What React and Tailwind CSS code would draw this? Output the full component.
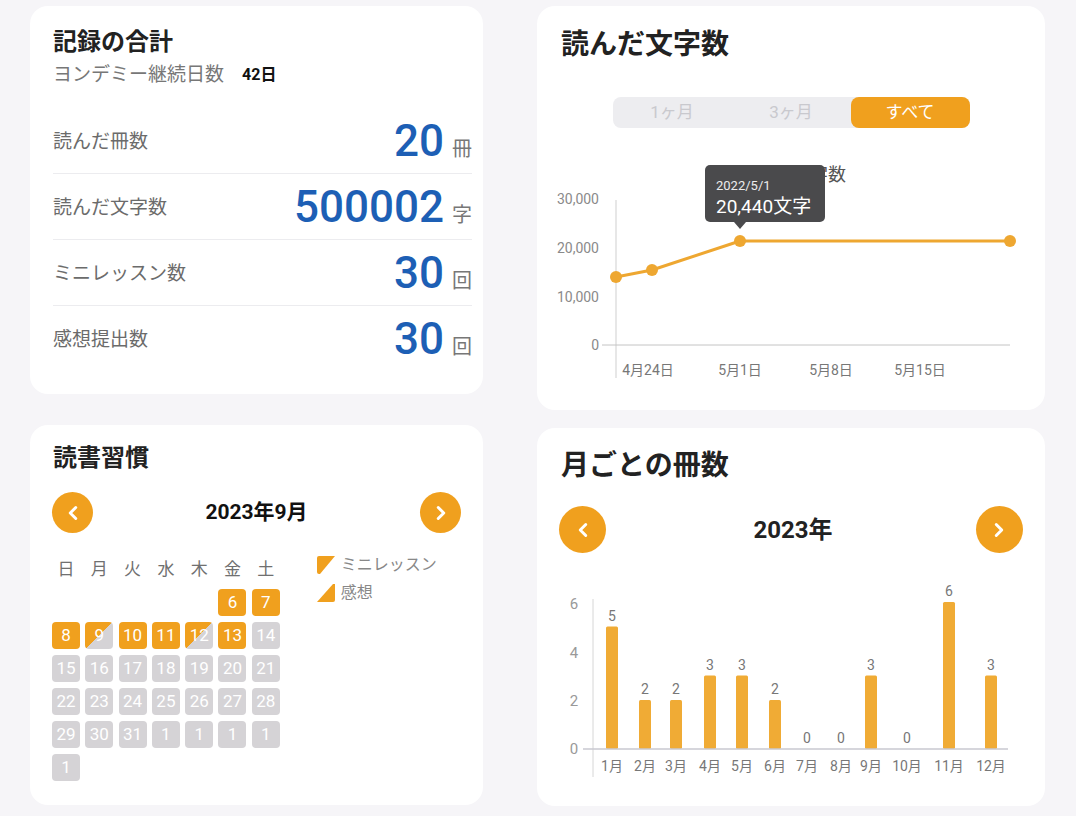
import React from 'react';
import { ChevronLeft, ChevronRight } from 'lucide-react';

const ORANGE = '#f0a01e';

// ─── 記録の合計 ─────────────────────────────────────────────
function StatRow({ label, value, unit, last }) {
  return (
    <div className={`h-[66px] flex items-center justify-between ${last ? '' : 'border-b border-[#ececef]'}`}>
      <span className="text-[19px] text-[#6b6b6b] pt-[3px]">{label}</span>
      <div className="flex items-baseline gap-[8px]">
        <span className="text-[44px] leading-none font-medium text-[#1d5fb5] font-[Roboto,sans-serif]">{value}</span>
        <span className="text-[20px] leading-none text-[#777]">{unit}</span>
      </div>
    </div>
  );
}

function TotalsCard() {
  return (
    <div className="h-[388px] bg-white rounded-[18px] pt-[20px] pl-[23px] pr-[11px]">
      <h2 className="text-[24px] leading-[32px] font-bold text-[#222]">記録の合計</h2>
      <div className="mt-[5px] text-[19px] leading-[24px] text-[#777] flex items-center gap-[18px]">
        <span>ヨンデミー継続日数</span>
        <span className="text-[16px] font-bold text-[#111]">42日</span>
      </div>
      <div className="mt-[21px]">
        <StatRow label="読んだ冊数" value="20" unit="冊" />
        <StatRow label="読んだ文字数" value="500002" unit="字" />
        <StatRow label="ミニレッスン数" value="30" unit="回" />
        <StatRow label="感想提出数" value="30" unit="回" last />
      </div>
    </div>
  );
}

// ─── 読んだ文字数 ───────────────────────────────────────────
function LineChart() {
  const pts = [[79, 127], [115, 120], [203, 91], [473, 91]];
  return (
    <svg width="508" height="245" viewBox="0 0 508 245" className="block">
      <text x="255" y="31" textAnchor="middle" fontSize="18" fill="#555">読んだ文字数</text>
      {[['30,000', 54], ['20,000', 103], ['10,000', 152], ['0', 200]].map(([t, y]) => (
        <text key={t} x="62" y={y} textAnchor="end" fontSize="14" fill="#8a8a8a">{t}</text>
      ))}
      <line x1="79" y1="50" x2="79" y2="228" stroke="#cfcfcf" strokeWidth="1" />
      <line x1="65" y1="195" x2="473" y2="195" stroke="#c4c4c4" strokeWidth="1" />
      {[['4月24日', 111], ['5月1日', 203], ['5月8日', 294], ['5月15日', 383]].map(([t, x]) => (
        <text key={t} x={x} y="225" textAnchor="middle" fontSize="14" fill="#777">{t}</text>
      ))}
      <polyline points={pts.map((p) => p.join(',')).join(' ')} fill="none" stroke="#eea731" strokeWidth="3" strokeLinejoin="round" />
      {pts.map(([x, y]) => (
        <circle key={x} cx={x} cy={y} r="6" fill="#eea731" />
      ))}
      <rect x="168" y="15" width="120" height="57" rx="5" fill="#4a4a4c" />
      <polygon points="197,72 209,72 203,79" fill="#4a4a4c" />
      <text x="179" y="40" fontSize="13" fill="#ececec">2022/5/1</text>
      <text x="179" y="63" fontSize="19" fill="#fff">20,440文字</text>
    </svg>
  );
}

function CharsCard() {
  const tabs = ['1ヶ月', '3ヶ月', 'すべて'];
  return (
    <div className="h-[404px] bg-white rounded-[18px] pt-[21px]">
      <h2 className="pl-[24px] text-[28px] leading-[36px] font-bold text-[#222]">読んだ文字数</h2>
      <div className="mt-[34px] mx-auto w-[357px] h-[31px] rounded-[8px] bg-[#ededf0] grid grid-cols-3">
        {tabs.map((t, i) => (
          <div
            key={t}
            className={`flex items-center justify-center text-[17px] rounded-[8px] ${i === 2 ? 'bg-[#f0a01e] text-white' : 'text-[#c9c9ce]'}`}
          >
            {t}
          </div>
        ))}
      </div>
      <div className="mt-[22px]">
        <LineChart />
      </div>
    </div>
  );
}

// ─── 読書習慣 ───────────────────────────────────────────────
function NavCircle({ dir, size }) {
  const Icon = dir === 'left' ? ChevronLeft : ChevronRight;
  return (
    <div className={`${size} rounded-full bg-[#f0a01e] flex items-center justify-center`}>
      <Icon size={22} strokeWidth={3.2} color="#fff" />
    </div>
  );
}

function HabitCard() {
  const week = ['日', '月', '火', '水', '木', '金', '土'];
  // f = both, h = mini lesson only, g = none, null = blank
  const cells = [
    null, null, null, null, null, ['6', 'f'], ['7', 'f'],
    ['8', 'f'], ['9', 'h'], ['10', 'f'], ['11', 'f'], ['12', 'h'], ['13', 'f'], ['14', 'g'],
    ['15', 'g'], ['16', 'g'], ['17', 'g'], ['18', 'g'], ['19', 'g'], ['20', 'g'], ['21', 'g'],
    ['22', 'g'], ['23', 'g'], ['24', 'g'], ['25', 'g'], ['26', 'g'], ['27', 'g'], ['28', 'g'],
    ['29', 'g'], ['30', 'g'], ['31', 'g'], ['1', 'g'], ['1', 'g'], ['1', 'g'], ['1', 'g'],
    ['1', 'g'],
  ];
  const cellBg = {
    f: 'bg-[#f0a01e]',
    h: 'bg-[linear-gradient(135deg,#f0a01e_50%,#d5d3d6_50%)]',
    g: 'bg-[#d5d3d6]',
  };
  return (
    <div className="h-[380px] bg-white rounded-[18px] pt-[17px] px-[22px]">
      <h2 className="pl-[1px] text-[24px] leading-[32px] font-bold text-[#222]">読書習慣</h2>
      <div className="mt-[18px] flex items-center justify-between">
        <NavCircle dir="left" size="w-[41px] h-[41px]" />
        <span className="text-[21px] font-bold text-[#111]">2023年9月</span>
        <NavCircle dir="right" size="w-[41px] h-[41px]" />
      </div>
      <div className="mt-[24px] flex items-start gap-[36px]">
        <div>
          <div className="grid grid-cols-[repeat(7,28px)] gap-x-[5.3px]">
            {week.map((w) => (
              <div key={w} className="text-center text-[17px] leading-[24px] text-[#707070]">{w}</div>
            ))}
          </div>
          <div className="mt-[8px] grid grid-cols-[repeat(7,28px)] gap-x-[5.3px] gap-y-[6px]">
            {cells.map((c, i) =>
              c ? (
                <div key={i} className={`h-[27px] rounded-[4px] flex items-center justify-center text-[17px] text-white ${cellBg[c[1]]}`}>
                  {c[0]}
                </div>
              ) : (
                <div key={i} className="h-[27px]" />
              )
            )}
          </div>
        </div>
        <div className="-mt-[3px] flex flex-col gap-[6px]">
          <div className="flex items-center gap-[5px] h-[22px]">
            <svg width="20" height="20" viewBox="0 0 20 20">
              <path d="M3 1 H19 L4 19 H3 Q1 19 1 17 V3 Q1 1 3 1 Z" fill={ORANGE} />
            </svg>
            <span className="text-[16px] text-[#888]">ミニレッスン</span>
          </div>
          <div className="flex items-center gap-[5px] h-[22px]">
            <svg width="20" height="20" viewBox="0 0 20 20">
              <path d="M17 1 H19 V17 Q19 19 17 19 H1 Z" fill={ORANGE} />
            </svg>
            <span className="text-[16px] text-[#888]">感想</span>
          </div>
        </div>
      </div>
    </div>
  );
}

// ─── 月ごとの冊数 ───────────────────────────────────────────
function BarChart() {
  const data = [
    ['1月', 75, 5], ['2月', 108, 2], ['3月', 139, 2], ['4月', 173, 3], ['5月', 205, 3], ['6月', 238, 2],
    ['7月', 270, 0], ['8月', 304, 0], ['9月', 334, 3], ['10月', 370, 0], ['11月', 412, 6], ['12月', 454, 3],
  ];
  const unit = 24.5;
  return (
    <svg width="508" height="215" viewBox="0 0 508 215" className="block">
      {[['6', 25], ['4', 74], ['2', 122], ['0', 170]].map(([t, y]) => (
        <text key={t} x="37" y={y + 5} textAnchor="middle" fontSize="15" fill="#999">{t}</text>
      ))}
      <line x1="56" y1="20" x2="56" y2="198" stroke="#d6d6d6" strokeWidth="1" />
      {data.map(([m, x, v]) => {
        const top = 170 - v * unit;
        return (
          <g key={m}>
            {v > 0 && <rect x={x - 6} y={top} width="12" height={v * unit} rx="1.5" fill="#f0ab35" />}
            <text x={x} y={top - 6} textAnchor="middle" fontSize="14" fill="#777">{v}</text>
            <text x={x} y="192" textAnchor="middle" fontSize="14" fill="#777">{m}</text>
          </g>
        );
      })}
      <line x1="46" y1="170" x2="471" y2="170" stroke="#c8c8d0" strokeWidth="1.5" />
    </svg>
  );
}

function MonthlyCard() {
  return (
    <div className="h-[378px] bg-white rounded-[18px] pt-[20px]">
      <h2 className="pl-[24px] text-[28px] leading-[36px] font-bold text-[#222]">月ごとの冊数</h2>
      <div className="mt-[22px] px-[22px] flex items-center justify-between">
        <NavCircle dir="left" size="w-[47px] h-[47px]" />
        <span className="text-[24px] font-bold text-[#222] pl-[4px]">2023年</span>
        <NavCircle dir="right" size="w-[47px] h-[47px]" />
      </div>
      <div className="mt-[26px]">
        <BarChart />
      </div>
    </div>
  );
}

export default function App() {
  return (
    <div className="w-[1076px] h-[816px] overflow-hidden bg-[#f6f5f8] font-[Roboto,'Noto_Sans_CJK_JP',sans-serif]">
      <div className="flex gap-[54px] pl-[30px] pt-[6px]">
        <div className="w-[453px] flex flex-col gap-[31px]">
          <TotalsCard />
          <HabitCard />
        </div>
        <div className="w-[508px] flex flex-col gap-[18px]">
          <CharsCard />
          <MonthlyCard />
        </div>
      </div>
    </div>
  );
}
